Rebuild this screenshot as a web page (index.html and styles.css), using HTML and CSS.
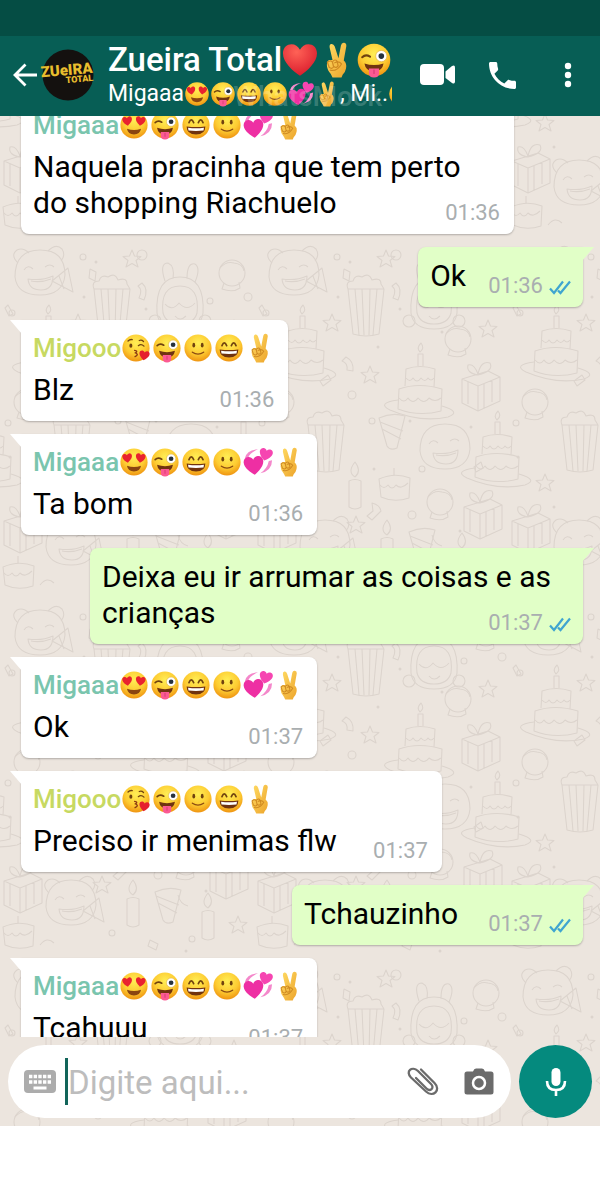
FILE: index.html
```
<!DOCTYPE html>
<html lang="pt-BR">
<head>
	<meta charset="UTF-8">
	<meta name="viewport" content="width=device-width, initial-scale=1">
	<title>Zueira Total</title>
	<link rel="stylesheet" href="styles.css">
</head>
<body>

	<!-- emojis -->
	<svg class="sprites" aria-hidden="true">
		<defs>
			<radialGradient id="skin" cx="50%" cy="32%" r="68%">
				<stop offset="0" stop-color="#ffee55"/>
				<stop offset="0.6" stop-color="#fdcb32"/>
				<stop offset="1" stop-color="#ef9411"/>
			</radialGradient>
			<linearGradient id="hand" x1="0" y1="0" x2="1" y2="1">
				<stop offset="0" stop-color="#ffdc65"/>
				<stop offset="1" stop-color="#eda42b"/>
			</linearGradient>
			<radialGradient id="red" cx="40%" cy="25%" r="80%">
				<stop offset="0" stop-color="#ff6256"/>
				<stop offset="1" stop-color="#d8192b"/>
			</radialGradient>
			<path id="heart-shape" d="M16 29C10 25 2 18 2 10.500C2 5.500 5.500 3 9 3c3 0 5.500 1.600 7 4.500C17.500 4.600 20 3 23 3c3.500 0 7 2.500 7 7.500C30 18 22 25 16 29z"/>
			<path id="smile-eyes" d="M8.500 13.500q2.500-6 5 0M18.500 13.500q2.500-6 5 0" fill="none" stroke="#70420f" stroke-width="1.800" stroke-linecap="round"/>
		</defs>
		<symbol id="e-love" viewBox="0 0 32 32">
			<circle cx="16" cy="16" r="14.500" fill="url(#skin)"/>
			<use href="#heart-shape" fill="#e9222f" transform="translate(3 6) rotate(-8 6 6) scale(.37)"/>
			<use href="#heart-shape" fill="#e9222f" transform="translate(17 6) rotate(8 6 6) scale(.37)"/>
			<path d="M8.500 20q7.500 2.500 15 0q-1 6-7.500 6t-7.500-6z" fill="#8a4511"/>
		</symbol>
		<symbol id="e-wink" viewBox="0 0 32 32">
			<circle cx="16" cy="16" r="14.500" fill="url(#skin)"/>
			<path d="M5.500 13.500q3-3 7-.5" fill="none" stroke="#70420f" stroke-width="1.800" stroke-linecap="round"/>
			<circle cx="22.500" cy="12.500" r="5" fill="#fff" stroke="#dfae42" stroke-width=".6"/>
			<circle cx="22.500" cy="12.500" r="2.500" fill="#26313e"/>
			<path d="M7.500 19q8.500 3 17 0q-1 7-8.500 7t-8.500-7z" fill="#70330f"/>
			<path d="M11.500 23.500h9v4q0 4-4.500 4t-4.500-4z" fill="#fb5a93"/>
			<path d="M16 24.500v4" stroke="#d63a74" stroke-width="1"/>
		</symbol>
		<symbol id="e-grin" viewBox="0 0 32 32">
			<circle cx="16" cy="16" r="14.500" fill="url(#skin)"/>
			<use href="#smile-eyes"/>
			<path d="M6 17.500q10 1.500 20 0q0 8.500-10 8.500t-10-8.500z" fill="#70330f"/>
			<path d="M7.500 18.800q8.500 1.200 17 0l-.5 3q-8 1-16 0z" fill="#fff"/>
		</symbol>
		<symbol id="e-smile" viewBox="0 0 32 32">
			<circle cx="16" cy="16" r="14.500" fill="url(#skin)"/>
			<ellipse cx="11.500" cy="13" rx="1.500" ry="2.500" fill="#70420f"/>
			<ellipse cx="20.500" cy="13" rx="1.500" ry="2.500" fill="#70420f"/>
			<path d="M10 20.500q6 4 12 0" fill="none" stroke="#8c4c12" stroke-width="1.500" stroke-linecap="round"/>
		</symbol>
		<symbol id="e-kiss" viewBox="0 0 32 32">
			<circle cx="16" cy="16" r="14.500" fill="url(#skin)"/>
			<ellipse cx="10.500" cy="13.500" rx="1.600" ry="2.300" fill="#70420f"/>
			<path d="M7.500 8.500q2-2 4.500-1.500M19.500 8q2.500-1 4.500 1M18.500 13.500q3-2.500 6 .5" fill="none" stroke="#70420f" stroke-width="1.400" stroke-linecap="round"/>
			<path d="M14.500 18.500q4 .5 1 2.700q4 1.800-.5 4" fill="none" stroke="#8c3a12" stroke-width="1.500" stroke-linecap="round"/>
			<use href="#heart-shape" fill="#e5202e" transform="translate(19.500 17) rotate(8) scale(.39)"/>
		</symbol>
		<symbol id="e-hearts" viewBox="0 0 32 32">
			<path d="M2 12q2-9 14-9.500q-9 3.500-10.500 9zM31 14q0 11-12.500 14q7.500-5 9-13z" fill="#f488cb"/>
			<use href="#heart-shape" fill="#ee2fa3" transform="translate(-.5 8) rotate(-6 11 11) scale(.75)"/>
			<use href="#heart-shape" fill="#f645b1" transform="translate(16.500 0) rotate(14 7 7) scale(.5)"/>
		</symbol>
		<symbol id="e-peace" viewBox="0 0 32 32">
			<path d="M12 16L9.500 5Q9 2 11 1.700t3 2.300l3.300 10.500L19.500 3q.5-2.500 2.700-2.300T24.300 3.500l-2.300 13q3 2.500 2 7q-.8 4-3 5.500l-1 2.500h-8l-1.500-3q-3.500-4-3.500-8q0-3.500 2-4.500z" fill="url(#hand)"/>
			<path d="M7.500 18q3-2.500 4.500 0l1 4q-1.500 2.500-4 .5zM12.500 17q2-2 3.500 0l1 4q-1.500 2.500-3.500 1M10 25q6 1.500 10-5.500q-2.500-3-6-1" fill="none" stroke="#cf8a22" stroke-width="1.100" stroke-linecap="round" stroke-linejoin="round"/>
		</symbol>
		<symbol id="e-heart" viewBox="0 0 32 32">
			<use href="#heart-shape" fill="url(#red)" transform="translate(-1.300 -1.300) scale(1.080)"/>
		</symbol>
		<symbol id="ticks" viewBox="0 0 22 16">
			<path d="M1 9.500l4 4.500L14 2.500M9 11.500l2.500 2.500L21 2.500" fill="none" stroke="#3fa5d0" stroke-width="2.200"/>
		</symbol>
	</svg>

	<div class="app">
		<div class="status-bar"></div>

		<header class="top-bar">
			<button class="back" type="button" aria-label="Voltar">
				<svg viewBox="0 0 24 24"><path d="M24 12H2M12.500 1.500L2 12l10.500 10.500" fill="none" stroke="#fff" stroke-width="2.800"/></svg>
			</button>
			<svg class="avatar" viewBox="0 0 52 52">
				<circle cx="26" cy="26" r="25.500" fill="#14110f"/>
				<g transform="rotate(-5 26 26)">
					<text class="logo-big" x="25" y="26" text-anchor="middle">ZUeIRA</text>
					<text class="logo-small" x="37" y="34" text-anchor="middle">TOTAL</text>
				</g>
			</svg>
			<div class="group">
				<h1>Zueira Total<svg class="emoji"><use href="#e-heart"/></svg><svg class="emoji"><use href="#e-peace"/></svg><svg class="emoji"><use href="#e-wink"/></svg></h1>
				<p class="members">Migaaa<svg class="emoji"><use href="#e-love"/></svg><svg class="emoji"><use href="#e-wink"/></svg><svg class="emoji"><use href="#e-grin"/></svg><svg class="emoji"><use href="#e-smile"/></svg><svg class="emoji"><use href="#e-hearts"/></svg><svg class="emoji"><use href="#e-peace"/></svg>, Mi..<svg class="emoji"><use href="#e-kiss"/></svg></p>
				<span class="watermark">WhatsMock</span>
			</div>
			<nav class="actions">
				<button type="button" aria-label="Chamada de vídeo">
					<svg class="video" viewBox="0 0 36 22"><rect x="0" y="0" width="24" height="21" rx="4" fill="#fff"/><path d="M25.500 7.500L32 2q3-1.500 3 1.500v14q0 3-3 1.500l-6.500-5z" fill="#fff"/></svg>
				</button>
				<button type="button" aria-label="Ligar">
					<svg class="phone" viewBox="3 3 18 18"><path d="M6.620 10.790c1.440 2.830 3.760 5.140 6.590 6.590l2.200-2.200c.27-.27.67-.36 1.020-.24 1.120.37 2.330.57 3.570.57.55 0 1 .45 1 1V20c0 .55-.45 1-1 1-9.390 0-17-7.610-17-17 0-.55.45-1 1-1h3.500c.55 0 1 .45 1 1 0 1.250.2 2.450.57 3.570.11.35.03.74-.25 1.020l-2.200 2.200z" fill="#fff"/></svg>
				</button>
				<button type="button" aria-label="Mais opções">
					<svg class="dots" viewBox="0 0 8 26"><circle cx="4" cy="4" r="3.200" fill="#fff"/><circle cx="4" cy="13" r="3.200" fill="#fff"/><circle cx="4" cy="22" r="3.200" fill="#fff"/></svg>
				</button>
			</nav>
		</header>

		<main class="chat">
			<!-- papel de parede -->
			<svg class="wallpaper" aria-hidden="true">
				<defs>
					<g id="w-star"><path d="M0-9l2.500 6 6.500.5-5 4 2 6.500-6-3.500-6 3.500 2-6.500-5-4 6.500-.5z"/></g>
					<g id="w-cake">
						<path d="M-15-7l1-17q14-5 29 0l-1 18M-22 16l1-20q20-7 43 0l-1 22q-22 6-43-2z"/>
						<path d="M-14-15q4 5 7 0q4 6 8 0q4 5 7 0q3 4 6 0M-21 5q5 6 9 0q5 7 10 0q6 7 11 0q6 5 12 0M-2-27v-12h5v12M0-41q-4-4 1-9q4 5-1 9"/>
						<path d="M-22 7q-22 3-8 10q30 13 58 7q14-5-6-11"/>
					</g>
					<g id="w-gift">
						<path d="M-18-6l26-8 12 6v24l-22 10-16-8zM-18-6l16 7 22-9M-2 1v25M-12-3v22M4-1v24M12-5v22M-2-10q-12-2-10-10q6-2 10 9q3-14 12-11q4 8-12 12"/>
					</g>
					<g id="w-corn">
						<path d="M-18-22l5 45q13 4 26 0l5-45zM-11-22l4 46M-4-22l2 46M4-22l-1 46M11-22l-4 46M-18-22q-3-8 5-8q2-7 9-4q7-5 10 3q9-3 9 4l3 5"/>
					</g>
					<g id="w-ball"><circle r="13"/><path d="M-12-5q6-7 14-5q9 1 10 8M-8 10l-2 6q11 4 18-1l-1-6"/></g>
					<g id="w-face">
						<path d="M-25 4q0-27 25-27t25 25q-2 20-25 20T-25 4zM-16-3q4-6 9-1M5-6q5-4 9 0M-12 6q14 2 25-3q0 14-12 14T-12 6zM-9 8q10 2 20-2"/>
					</g>
					<g id="w-bear">
						<use href="#w-face"/><path d="M-22-10q-8-8-1-13q6-3 12 3M8-22q8-8 14-2q4 6-1 12M12 8l16-13 5 24zM19 3l5 13"/>
					</g>
					<g id="w-bunny">
						<path d="M-23 12q-2-36 23-36t23 36q-2 16-23 16t-23-16zM-17 12q-3-27 17-27t17 27q-3 11-17 11t-17-11zM-15-20q-6-18 3-18q7 3 5 16M7-22q0-17 8-15q6 4 0 18M-15 3q7 8 14-1q8 9 16 0M-5 15q5 6 11 0"/>
						<circle cx="-25" cy="20" r="6"/><circle cx="25" cy="20" r="6"/>
					</g>
					<g id="w-candle"><path d="M-6-8q6-3 12 0v26q-6 4-12 0zM0-12q-8-5 0-15q7 9 0 15"/></g>
					<g id="w-cone"><path d="M-14-15q13-6 26-2l-8 32q-7 3-10-2zM-11-4l19 10M-13-11l23 9"/></g>
					<g id="w-slice"><path d="M-15-6l2 18q13 6 28 1l1-20q-15-6-31 1zM-14 0q4 5 8 0q4 6 8 0q5 5 12-2M0-10v-7"/></g>
					<pattern id="party" width="254" height="360" y="119" patternUnits="userSpaceOnUse">
						<g fill="none" stroke="#dcd4cd" stroke-width="1.100" stroke-linejoin="round">
							<use href="#w-bear" x="40" y="38"/>
							<use href="#w-corn" x="112" y="76"/>
							<use href="#w-bunny" x="180" y="66"/>
							<use href="#w-ball" x="232" y="38"/>
							<use href="#w-cake" x="48" y="120"/>
							<use href="#w-ball" x="204" y="104"/>
							<use href="#w-cake" x="166" y="158"/>
							<use href="#w-gift" x="226" y="150"/>
							<use href="#w-ball" x="27" y="167"/>
							<use href="#w-corn" x="72" y="212"/>
							<use href="#w-cone" x="139" y="198"/>
							<use href="#w-face" x="191" y="212"/>
							<use href="#w-cake" x="243" y="226"/>
							<use href="#w-cake" x="-11" y="226"/>
							<use href="#w-slice" x="140" y="250"/>
							<use href="#w-candle" x="101" y="254"/>
							<use href="#w-ball" x="186" y="267"/>
							<use href="#w-gift" x="228" y="278"/>
							<use href="#w-bear" x="71" y="308"/>
							<use href="#w-candle" x="133" y="312"/>
							<use href="#w-cone" x="169" y="312"/>
							<use href="#w-candle" x="208" y="325"/>
							<use href="#w-gift" x="22" y="292"/>
							<use href="#w-slice" x="18" y="338"/>
							<use href="#w-star" x="78" y="88"/>
							<use href="#w-star" x="234" y="94"/>
							<use href="#w-star" x="37" y="248"/>
							<use href="#w-star" x="116" y="140"/>
							<use href="#w-star" x="102" y="290"/>
							<use href="#w-star" x="238" y="330"/>
							<use href="#w-star" x="132" y="24"/>
							<circle cx="83" cy="22" r="3"/><circle cx="142" cy="20" r="5"/><circle cx="98" cy="160" r="4"/>
							<circle cx="210" cy="66" r="3"/><circle cx="12" cy="78" r="3"/><circle cx="248" cy="62" r="4"/>
							<circle cx="118" cy="186" r="3"/><circle cx="168" cy="234" r="3"/><circle cx="158" cy="280" r="4"/>
							<circle cx="8" cy="188" r="3"/><circle cx="192" cy="344" r="3"/><circle cx="112" cy="338" r="3"/>
							<path d="M90 34l6 3-1 9-6-3zM142 48q7 6 2 17l-5-2q4-8-1-12zM8 70l5 9-4 2-4-8zM92 122q8 4 7 14l-6-1q1-7-5-9zM118 268q8 2 9 8l-9 9-5-4 6-5zM178 300q2 9 10 11M66 146l8-6 3 5-8 6zM220 232l7-5 2 6-7 4zM40 350q7-9 14-2M150 345l8 4-2 6-8-4z"/>
						</g>
						<g fill="#dcd4cd">
							<circle cx="96" cy="27" r="1.500"/><circle cx="146" cy="74" r="1.500"/><circle cx="84" cy="62" r="1.500"/>
							<circle cx="188" cy="97" r="1.500"/><circle cx="124" cy="112" r="1.500"/><circle cx="156" cy="186" r="1.500"/>
							<circle cx="217" cy="192" r="1.500"/><circle cx="120" cy="234" r="1.500"/><circle cx="206" cy="296" r="1.500"/>
							<circle cx="46" cy="272" r="1.500"/><circle cx="186" cy="356" r="1.500"/><circle cx="10" cy="222" r="1.500"/>
						</g>
					</pattern>
				</defs>
				<rect width="100%" height="100%" fill="url(#party)"/>
			</svg>

			<div class="messages">
				<article class="msg in">
					<h2 class="name migaaa">Migaaa<svg class="emoji"><use href="#e-love"/></svg><svg class="emoji"><use href="#e-wink"/></svg><svg class="emoji"><use href="#e-grin"/></svg><svg class="emoji"><use href="#e-smile"/></svg><svg class="emoji"><use href="#e-hearts"/></svg><svg class="emoji"><use href="#e-peace"/></svg></h2>
					<div class="line"><p>Naquela pracinha que tem perto do shopping Riachuelo</p><time>01:36</time></div>
				</article>
				<article class="msg out short">
					<div class="line"><p>Ok</p><time>01:36<svg class="ticks"><use href="#ticks"/></svg></time></div>
				</article>
				<article class="msg in">
					<h2 class="name migooo">Migooo<svg class="emoji"><use href="#e-kiss"/></svg><svg class="emoji"><use href="#e-wink"/></svg><svg class="emoji"><use href="#e-smile"/></svg><svg class="emoji"><use href="#e-grin"/></svg><svg class="emoji"><use href="#e-peace"/></svg></h2>
					<div class="line"><p>Blz</p><time>01:36</time></div>
				</article>
				<article class="msg in">
					<h2 class="name migaaa">Migaaa<svg class="emoji"><use href="#e-love"/></svg><svg class="emoji"><use href="#e-wink"/></svg><svg class="emoji"><use href="#e-grin"/></svg><svg class="emoji"><use href="#e-smile"/></svg><svg class="emoji"><use href="#e-hearts"/></svg><svg class="emoji"><use href="#e-peace"/></svg></h2>
					<div class="line"><p>Ta bom</p><time>01:36</time></div>
				</article>
				<article class="msg out">
					<div class="line"><p>Deixa eu ir arrumar as coisas e as crianças</p><time>01:37<svg class="ticks"><use href="#ticks"/></svg></time></div>
				</article>
				<article class="msg in">
					<h2 class="name migaaa">Migaaa<svg class="emoji"><use href="#e-love"/></svg><svg class="emoji"><use href="#e-wink"/></svg><svg class="emoji"><use href="#e-grin"/></svg><svg class="emoji"><use href="#e-smile"/></svg><svg class="emoji"><use href="#e-hearts"/></svg><svg class="emoji"><use href="#e-peace"/></svg></h2>
					<div class="line"><p>Ok</p><time>01:37</time></div>
				</article>
				<article class="msg in">
					<h2 class="name migooo">Migooo<svg class="emoji"><use href="#e-kiss"/></svg><svg class="emoji"><use href="#e-wink"/></svg><svg class="emoji"><use href="#e-smile"/></svg><svg class="emoji"><use href="#e-grin"/></svg><svg class="emoji"><use href="#e-peace"/></svg></h2>
					<div class="line"><p>Preciso ir menimas flw</p><time>01:37</time></div>
				</article>
				<article class="msg out">
					<div class="line"><p>Tchauzinho</p><time>01:37<svg class="ticks"><use href="#ticks"/></svg></time></div>
				</article>
				<article class="msg in">
					<h2 class="name migaaa">Migaaa<svg class="emoji"><use href="#e-love"/></svg><svg class="emoji"><use href="#e-wink"/></svg><svg class="emoji"><use href="#e-grin"/></svg><svg class="emoji"><use href="#e-smile"/></svg><svg class="emoji"><use href="#e-hearts"/></svg><svg class="emoji"><use href="#e-peace"/></svg></h2>
					<div class="line"><p>Tcahuuu</p><time>01:37</time></div>
				</article>
			</div>

			<form class="composer">
				<div class="field">
					<button type="button" aria-label="Teclado">
						<svg class="keyboard" viewBox="0 0 32 23"><rect width="32" height="23" rx="4" fill="#acacac"/><path d="M5 6.500h22M5 12h22" stroke="#fff" stroke-width="3.600" stroke-dasharray="3.400 1.250"/><path d="M9.500 18h13" stroke="#fff" stroke-width="3"/></svg>
					</button>
					<span class="caret"></span>
					<input type="text" placeholder="Digite aqui..." aria-label="Mensagem">
					<button type="button" aria-label="Anexar">
						<svg class="clip" viewBox="0 0 32 30"><path d="M14 2.500L27.500 16c7 7-1.500 15-8.500 8.500L4 10.500C-2 4.500 5 -1.500 11 4L24 17c4 4-1 8-4.500 4.500L9 11" fill="none" stroke="#6b6b6b" stroke-width="2.300" stroke-linecap="round"/></svg>
					</button>
					<button type="button" aria-label="Câmera">
						<svg class="camera" viewBox="0 0 30 27"><path d="M9 3.500Q10 .5 12 .5h6q2 0 3 3h6q2.500 0 2.500 2.500v18q0 2.500-2.500 2.500H3Q.5 26.500.5 24V6Q.5 3.500 3 3.500z" fill="#6b6b6b"/><circle cx="15" cy="15" r="6" fill="none" stroke="#fff" stroke-width="2.500"/></svg>
					</button>
				</div>
				<button class="mic" type="button" aria-label="Gravar áudio">
					<svg viewBox="0 0 22 30"><rect x="6.500" y="1" width="9" height="18" rx="4.500" fill="#fff"/><path d="M2 14q0 9 9 9t9-9M11 23v6" fill="none" stroke="#fff" stroke-width="2.600"/></svg>
				</button>
			</form>
		</main>
	</div>

</body>
</html>
```
FILE: styles.css
```
* {
box-sizing: border-box;
}
body, h1, h2, p {
margin: 0;
}
body {
font-family: Roboto, "Liberation Sans", sans-serif;
background: #fff;
color: #000;
}
button {
display: flex;
align-items: center;
justify-content: center;
padding: 0;
border: 0;
background: none;
}
.sprites {
position: absolute;
width: 0;
height: 0;
}

/* la pantalla completa */
.app {
display: flex;
flex-direction: column;
height: 100vh;
padding-bottom: 74px;
}
.status-bar {
flex: none;
height: 36px;
background: #054d44;
}

/* cabecera */
.top-bar {
display: flex;
flex: none;
align-items: center;
height: 80px;
padding: 0 28px 2px 13px;
background: #075e55;
color: #fff;
}
.back svg {
width: 24px;
height: 24px;
}
.avatar {
flex: none;
width: 52px;
height: 52px;
margin: 0 14px 0 5px;
overflow: visible;
}
.logo-big, .logo-small {
fill: #e9be2e;
font-weight: 900;
}
.logo-big {
font-size: 15px;
}
.logo-small {
font-size: 9px;
}
.group {
position: relative;
flex: 1;
min-width: 0;
overflow: hidden;
white-space: nowrap;
}
.group h1 {
font-size: 33px;
font-weight: 500;
line-height: 38px;
}
.group h1 .emoji {
width: 36px;
height: 36px;
margin-right: 1px;
vertical-align: -7px;
}
.members {
font-size: 23px;
line-height: 30px;
}
.members .emoji {
width: 26px;
height: 26px;
vertical-align: -6px;
}
.watermark {
position: absolute;
right: 10px;
bottom: 0;
font-size: 28px;
font-weight: 500;
line-height: 24px;
color: rgba(255,255,255,0.2);
}
.actions {
display: flex;
flex: none;
align-items: center;
margin-left: 28px;
}
.video {
width: 36px;
height: 22px;
margin-right: 33px;
}
.phone {
width: 27px;
height: 27px;
margin-right: 48px;
}
.dots {
width: 8px;
height: 26px;
}

/* conversacion */
.chat {
position: relative;
display: flex;
flex: 1;
flex-direction: column;
min-height: 0;
background: #ece5de;
}
.wallpaper {
position: absolute;
top: 0;
left: 0;
width: 100%;
height: 100%;
}
.messages {
position: relative;
display: flex;
flex: 1;
flex-direction: column;
align-items: flex-start;
gap: 13px;
min-height: 0;
padding: 0 17px 0 21px;
overflow: hidden;
}
.msg {
position: relative;
flex: none;
max-width: calc(100% - 69px);
padding: 10px 12px 13px;
border-radius: 8px;
box-shadow: 0 1px 2px rgba(0,0,0,0.25);
}
/* el primer mensaje queda cortado por la cabecera */
.msg:first-child {
margin-top: -19px;
}
.in {
background: #fff;
border-top-left-radius: 0;
}
.out {
align-self: flex-end;
padding-top: 11px;
background: #e1ffc7;
border-top-right-radius: 0;
}
.msg::before {
position: absolute;
top: 0;
width: 12px;
height: 14px;
content: "";
}
.in::before {
left: -11px;
background: #fff;
clip-path: polygon(0 0, 100% 0, 100% 100%);
}
.out::before {
right: -11px;
background: #e1ffc7;
clip-path: polygon(0 0, 100% 0, 0 100%);
}
.name {
margin-bottom: 6px;
font-size: 26px;
font-weight: 500;
line-height: 36px;
white-space: nowrap;
}
.name .emoji {
width: 30px;
height: 30px;
margin-right: 1px;
vertical-align: -6px;
}
.migaaa {
color: #7ac5ae;
}
.migooo {
color: #c7d961;
}

/* texto y hora comparten la misma celda */
.line {
display: grid;
}
.line p, .line time {
grid-area: 1 / 1;
}
.line p {
font-size: 30px;
line-height: 36px;
}
/* hueco para la hora */
.line p::after {
display: inline-block;
width: 93px;
content: "";
}
.out .line p::after {
width: 113px;
}
.short .line p::after {
width: 105px;
}
.line time {
align-self: end;
justify-self: end;
margin: 0 2px -5px 0;
font-size: 22px;
line-height: 26px;
color: #a9aeb0;
}
.ticks {
width: 22px;
height: 16px;
margin-left: 6px;
vertical-align: -2px;
}
.out .line time {
margin-right: 0;
}

/* caja de escritura */
.composer {
position: relative;
display: flex;
flex: none;
gap: 8px;
padding: 8px;
}
.field {
display: flex;
flex: 1;
align-items: center;
min-width: 0;
height: 73px;
padding: 0 17px 0 16px;
border-radius: 37px;
background: #fff;
}
.field input {
flex: 1;
min-width: 0;
padding: 2px 0 0;
border: 0;
outline: 0;
background: none;
font-family: inherit;
font-size: 33px;
}
.field input::placeholder {
color: #bdbdbd;
opacity: 1;
}
.keyboard {
width: 32px;
height: 23px;
}
.caret {
width: 3px;
height: 47px;
margin-left: 9px;
background: #12655a;
}
.clip {
width: 32px;
height: 30px;
}
.camera {
width: 30px;
height: 27px;
margin-left: 25px;
}
.mic {
width: 73px;
height: 73px;
border-radius: 50%;
background: #058a7e;
}
.mic svg {
width: 22px;
height: 30px;
}
```
